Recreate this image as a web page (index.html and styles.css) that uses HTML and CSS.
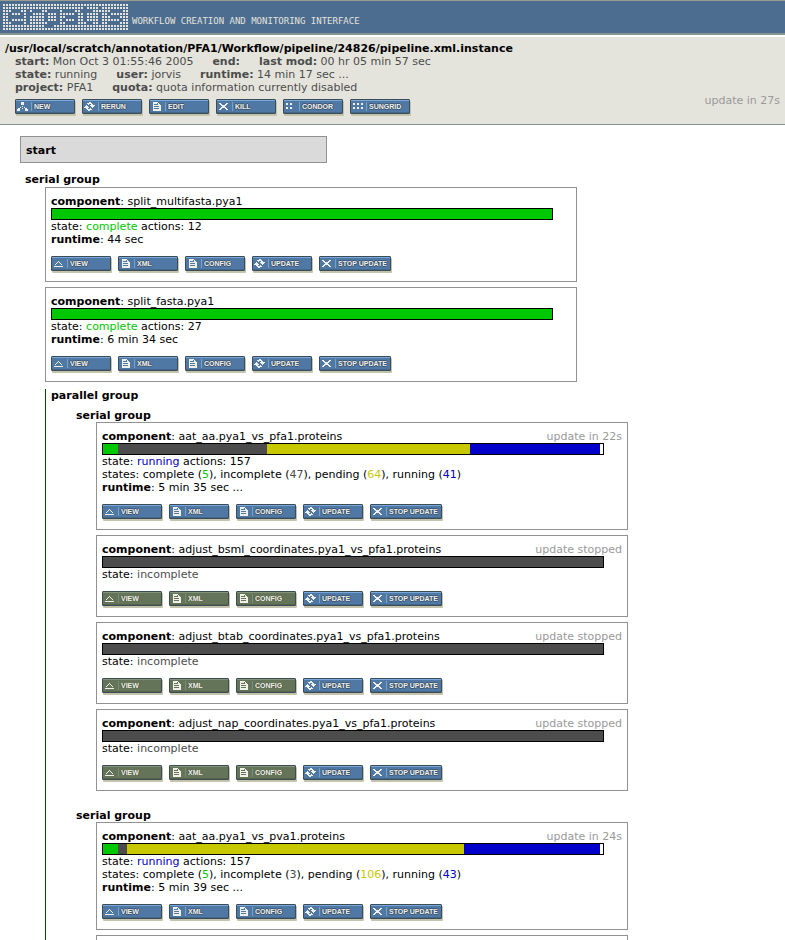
FILE: index.html
```
<!DOCTYPE html>
<html lang="en">
<head>
<meta charset="utf-8">
<title>ergatis</title>
<link rel="stylesheet" href="styles.css">
</head>
<body>
<svg class="defs" aria-hidden="true">
  <symbol id="view" viewBox="0 0 11 9"><path d="M1 7.5H10M1.5 6.5L5.5 2.5L9.5 6.5" fill="none" stroke="currentColor"/></symbol>
  <symbol id="doc" viewBox="0 0 11 9"><path fill="currentColor" fill-rule="evenodd" d="M2 0H7V1H8V2H9V3H10V9H2ZM3 2V3H6V2ZM3 4V5H8V4ZM3 6V7H8V6ZM6 1V3H7V1Z"/></symbol>
  <symbol id="cycle" viewBox="0 0 11 9"><path fill="currentColor" d="M5 0H7V1H8V2H9V3H11V4H10V5H9V6H8V5H7V4H6V3H7V2H5V3H4V2H3V1H5ZM2 3H3V4H4V5H5V6H4V7H6V6H7V7H8V8H6V9H4V8H3V7H2V6H0V5H1V4H2Z"/></symbol>
  <symbol id="cross" viewBox="0 0 11 9"><path fill="currentColor" d="M1 1H3V2H4V3H7V2H8V1H10V2H9V3H8V4H7V5H8V6H9V7H10V8H8V7H7V6H4V7H3V8H1V7H2V6H3V5H4V4H3V3H2V2H1Z"/></symbol>
  <symbol id="tree" viewBox="0 0 11 9"><path fill="currentColor" d="M4 0H7V3H4ZM5 4H6V5H5ZM3 5H4V6H3ZM7 5H8V6H7ZM1 6H3V9H0V7H1ZM5 6H6V7H5ZM8 6H10V7H11V9H8Z"/></symbol>
  <symbol id="four" viewBox="0 0 11 9"><path fill="currentColor" d="M1 1H3V3H1ZM5 1H7V3H5ZM1 5H3V7H1ZM5 5H7V7H5Z"/></symbol>
  <symbol id="six" viewBox="0 0 11 9"><path fill="currentColor" d="M1 1H3V3H1ZM5 1H7V3H5ZM9 1H11V3H9ZM1 5H3V7H1ZM5 5H7V7H5ZM9 5H11V7H9Z"/></symbol>
</svg>

<header class="banner">
  <svg class="logo" viewBox="0 0 42 9" role="img" aria-label="ergatis">
    <defs><pattern id="dots" width="1" height="1" patternUnits="userSpaceOnUse"><rect width=".667" height=".667" fill="#e4e4dc"/></pattern></defs>
    <rect width="42" height="9" fill="url(#dots)"/>
    <path class="letters" d="M3 2.5H6M2.5 3V6M6.5 3V5M3 4.5H6M3 6.5H7M8.5 2V7M9 3.5H10M10 2.5H13M15 2.5H18M14.5 3V6M18.5 2V7M15 6.5H18M14 7.5H17M20 2.5H24M24.5 3V7M21 4.5H24M20.5 5V6M21 6.5H24M27.5 1V6M26 2.5H30M28 6.5H30M32.5 1V2M32.5 3V7M36 2.5H40M35.5 3V4M36 4.5H39M39.5 5V6M35 6.5H39"/>
  </svg>
  <p class="tagline">WORKFLOW CREATION AND MONITORING INTERFACE</p>
</header>

<section class="info">
  <h1>/usr/local/scratch/annotation/PFA1/Workflow/pipeline/24826/pipeline.xml.instance</h1>
  <div class="facts">
    <p><span><b>start:</b> Mon Oct 3 01:55:46 2005</span><span><b>end:</b></span><span><b>last mod:</b> 00 hr 05 min 57 sec</span></p>
    <p><span><b>state:</b> running</span><span><b>user:</b> jorvis</span><span><b>runtime:</b> 14 min 17 sec ...</span></p>
    <p><span><b>project:</b> PFA1</span><span><b>quota:</b> quota information currently disabled</span></p>
  </div>
  <div class="actions">
    <div class="buttons">
      <button><svg><use href="#tree"/></svg><span>NEW</span></button>
      <button><svg><use href="#cycle"/></svg><span>RERUN</span></button>
      <button><svg><use href="#doc"/></svg><span>EDIT</span></button>
      <button><svg><use href="#cross"/></svg><span>KILL</span></button>
      <button><svg><use href="#four"/></svg><span>CONDOR</span></button>
      <button><svg><use href="#six"/></svg><span>SUNGRID</span></button>
    </div>
    <span class="update">update in 27s</span>
  </div>
</section>

<main>
  <div class="start">start</div>
  <section class="group">
    <h2>serial group</h2>
    <div class="members">
      <article class="component">
        <header><p><b>component</b>: split_multifasta.pya1</p></header>
        <div class="bar"><i class="complete" style="width:100%"></i></div>
        <p>state: <span class="t-complete">complete</span> actions: 12</p>
        <p><b>runtime</b>: 44 sec</p>
        <div class="buttons">
          <button><svg><use href="#view"/></svg><span>VIEW</span></button>
          <button><svg><use href="#doc"/></svg><span>XML</span></button>
          <button><svg><use href="#doc"/></svg><span>CONFIG</span></button>
          <button><svg><use href="#cycle"/></svg><span>UPDATE</span></button>
          <button class="wide"><svg><use href="#cross"/></svg><span>STOP UPDATE</span></button>
        </div>
      </article>
      <article class="component">
        <header><p><b>component</b>: split_fasta.pya1</p></header>
        <div class="bar"><i class="complete" style="width:100%"></i></div>
        <p>state: <span class="t-complete">complete</span> actions: 27</p>
        <p><b>runtime</b>: 6 min 34 sec</p>
        <div class="buttons">
          <button><svg><use href="#view"/></svg><span>VIEW</span></button>
          <button><svg><use href="#doc"/></svg><span>XML</span></button>
          <button><svg><use href="#doc"/></svg><span>CONFIG</span></button>
          <button><svg><use href="#cycle"/></svg><span>UPDATE</span></button>
          <button class="wide"><svg><use href="#cross"/></svg><span>STOP UPDATE</span></button>
        </div>
      </article>
      <section class="parallel">
        <h2>parallel group</h2>
        <section class="group">
          <h2>serial group</h2>
          <div class="members">
            <article class="component">
              <header><p><b>component</b>: aat_aa.pya1_vs_pfa1.proteins</p><span class="update">update in 22s</span></header>
              <div class="bar"><i class="complete" style="width:3%"></i><i class="incomplete" style="width:29.8%"></i><i class="pending" style="width:40.6%"></i><i class="running" style="width:26%"></i></div>
              <p>state: <span class="t-running">running</span> actions: 157</p>
              <p>states: complete (<span class="t-complete">5</span>), incomplete (<span class="t-incomplete">47</span>), pending (<span class="t-pending">64</span>), running (<span class="t-running">41</span>)</p>
              <p><b>runtime</b>: 5 min 35 sec ...</p>
              <div class="buttons">
                <button><svg><use href="#view"/></svg><span>VIEW</span></button>
                <button><svg><use href="#doc"/></svg><span>XML</span></button>
                <button><svg><use href="#doc"/></svg><span>CONFIG</span></button>
                <button><svg><use href="#cycle"/></svg><span>UPDATE</span></button>
                <button class="wide"><svg><use href="#cross"/></svg><span>STOP UPDATE</span></button>
              </div>
            </article>
            <article class="component">
              <header><p><b>component</b>: adjust_bsml_coordinates.pya1_vs_pfa1.proteins</p><span class="update">update stopped</span></header>
              <div class="bar"><i class="incomplete" style="width:100%"></i></div>
              <p>state: <span class="t-incomplete">incomplete</span></p>
              <div class="buttons">
                <button disabled><svg><use href="#view"/></svg><span>VIEW</span></button>
                <button disabled><svg><use href="#doc"/></svg><span>XML</span></button>
                <button disabled><svg><use href="#doc"/></svg><span>CONFIG</span></button>
                <button><svg><use href="#cycle"/></svg><span>UPDATE</span></button>
                <button class="wide"><svg><use href="#cross"/></svg><span>STOP UPDATE</span></button>
              </div>
            </article>
            <article class="component">
              <header><p><b>component</b>: adjust_btab_coordinates.pya1_vs_pfa1.proteins</p><span class="update">update stopped</span></header>
              <div class="bar"><i class="incomplete" style="width:100%"></i></div>
              <p>state: <span class="t-incomplete">incomplete</span></p>
              <div class="buttons">
                <button disabled><svg><use href="#view"/></svg><span>VIEW</span></button>
                <button disabled><svg><use href="#doc"/></svg><span>XML</span></button>
                <button disabled><svg><use href="#doc"/></svg><span>CONFIG</span></button>
                <button><svg><use href="#cycle"/></svg><span>UPDATE</span></button>
                <button class="wide"><svg><use href="#cross"/></svg><span>STOP UPDATE</span></button>
              </div>
            </article>
            <article class="component">
              <header><p><b>component</b>: adjust_nap_coordinates.pya1_vs_pfa1.proteins</p><span class="update">update stopped</span></header>
              <div class="bar"><i class="incomplete" style="width:100%"></i></div>
              <p>state: <span class="t-incomplete">incomplete</span></p>
              <div class="buttons">
                <button disabled><svg><use href="#view"/></svg><span>VIEW</span></button>
                <button disabled><svg><use href="#doc"/></svg><span>XML</span></button>
                <button disabled><svg><use href="#doc"/></svg><span>CONFIG</span></button>
                <button><svg><use href="#cycle"/></svg><span>UPDATE</span></button>
                <button class="wide"><svg><use href="#cross"/></svg><span>STOP UPDATE</span></button>
              </div>
            </article>
          </div>
        </section>
        <section class="group">
          <h2>serial group</h2>
          <div class="members">
            <article class="component">
              <header><p><b>component</b>: aat_aa.pya1_vs_pva1.proteins</p><span class="update">update in 24s</span></header>
              <div class="bar"><i class="complete" style="width:3%"></i><i class="incomplete" style="width:1.8%"></i><i class="pending" style="width:67.4%"></i><i class="running" style="width:27.2%"></i></div>
              <p>state: <span class="t-running">running</span> actions: 157</p>
              <p>states: complete (<span class="t-complete">5</span>), incomplete (<span class="t-incomplete">3</span>), pending (<span class="t-pending">106</span>), running (<span class="t-running">43</span>)</p>
              <p><b>runtime</b>: 5 min 39 sec ...</p>
              <div class="buttons">
                <button><svg><use href="#view"/></svg><span>VIEW</span></button>
                <button><svg><use href="#doc"/></svg><span>XML</span></button>
                <button><svg><use href="#doc"/></svg><span>CONFIG</span></button>
                <button><svg><use href="#cycle"/></svg><span>UPDATE</span></button>
                <button class="wide"><svg><use href="#cross"/></svg><span>STOP UPDATE</span></button>
              </div>
            </article>
            <article class="component"></article>
          </div>
        </section>
      </section>
    </div>
  </section>
</main>
</body>
</html>
```
FILE: styles.css
```
* { box-sizing: border-box; margin: 0; padding: 0; }

body {
  display: flex;
  flex-direction: column;
  height: 100vh;
  overflow: hidden;
  background: #fff;
  color: #000;
  font: 11px/13px "DejaVu Sans", Verdana, sans-serif;
}

h1, h2 { font-size: 11px; line-height: 13px; }
.defs { display: none; }

.banner {
  display: flex;
  flex: none;
  align-items: flex-start;
  gap: 3px;
  padding: 3px 3px 2px;
  border-top: 1px solid #9c9c90;
  border-bottom: 2px solid #84948e;
  background: #4c6c90;
}
.logo { width: 126px; height: 27px; shape-rendering: crispEdges; }
.letters { fill: none; stroke: #4c6c90; stroke-width: 1; }
.tagline { margin-top: 12px; color: #e4e4dc; font: 9px/11px "DejaVu Sans Mono", monospace; }

.info {
  flex: none;
  margin-top: 2px;
  padding: 5px 5px 10px;
  border-bottom: 1px solid #80948c;
  background: #e4e4dc;
}
.facts { padding-left: 10px; color: #4c4c4c; }
.facts p { display: flex; gap: 19px; }
.actions { display: flex; padding-left: 10px; justify-content: space-between; }
.update { color: #999; white-space: nowrap; }

.buttons { display: flex; gap: 7px; margin-top: 5px; }
button {
  display: flex;
  align-items: center;
  width: 60px;
  height: 15px;
  padding-left: 1px;
  border: 1px solid #3c4c54;
  border-radius: 1px;
  background: #5078a4;
  box-shadow: inset 0 1px #78a8dc, inset 0 -1px #44688c, 1px 2px #c4c4ae;
  color: #f0f0e8;
  font: bold 7px/9px "Liberation Sans", Arial, sans-serif;
  white-space: nowrap;
}
button.wide { width: 72px; }
button svg { flex: none; width: 11px; height: 9px; shape-rendering: crispEdges; }
button span {
  margin-left: 3px;
  padding-left: 2px;
  border-left: 1px solid #78a0c8;
  text-shadow: 1px 0 #3c5470, -1px 0 #3c5470, 0 1px #3c5470, 0 -1px #3c5470;
}
button:disabled {
  background: #647458;
  box-shadow: inset 0 1px #84947c, inset 0 -1px #58644c, 1px 2px #c4c4ae;
}
button:disabled span { border-color: #7c8c70; text-shadow: 1px 0 #4c5840, -1px 0 #4c5840; }

main { flex: 1; min-height: 0; padding: 11px 20px 0; overflow: hidden; }
.start {
  width: 307px;
  max-width: 100%;
  margin-bottom: 10px;
  padding: 7px 5px 5px;
  border: 1px solid #929292;
  background: #dadada;
  font-weight: bold;
}
main > .group { padding-left: 5px; }
main > .group > .members { padding-top: 1px; }
.members { padding-left: 20px; }

.component {
  max-width: 532px;
  margin-bottom: 5px;
  padding: 7px 5px 10px;
  border: 1px solid #929292;
}
.component header { display: flex; justify-content: space-between; }
.bar { display: flex; max-width: 502px; height: 12px; border: 1px solid #000; }
.component .buttons { margin-top: 10px; }
.complete { background: #00c800; }
.incomplete { background: #4c4c4c; }
.pending { background: #c8c800; }
.running { background: #0000c8; }
.t-complete { color: #00c800; }
.t-incomplete { color: #4c4c4c; }
.t-pending { color: #c8c800; }
.t-running { color: #0000c8; }

.parallel { margin-top: 7px; padding-left: 5px; border-left: 1px solid #005000; }
.parallel .group { padding: 7px 0 6px 25px; }
```
